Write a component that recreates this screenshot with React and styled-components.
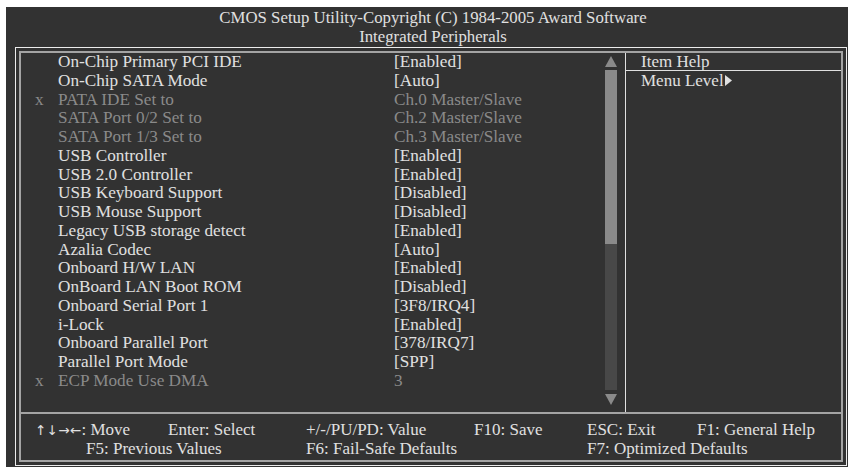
import React from "react";
import styled, { createGlobalStyle } from "styled-components";

const GlobalStyle = createGlobalStyle`
  html, body {
    margin: 0;
    padding: 0;
    background: #ffffff;
  }
  body {
    font-family: "Liberation Serif", "Times New Roman", serif;
  }
`;

const Screen = styled.div`
  margin: 7px 0 0 6px;
  width: 842px;
  height: 460px;
  background: #323232;
  color: #e0e0e0;
  font-size: 17px;
  display: flex;
  flex-direction: column;
  overflow: hidden;
`;

const Header = styled.div`
  height: 40px;
  padding-top: 1px;
  box-sizing: border-box;
  padding-left: 12px;
  text-align: center;
  line-height: 19px;
  font-size: 16.8px;
`;

const OuterFrame = styled.div`
  margin-left: 9px;
  width: 832px;
  height: 419px;
  box-sizing: border-box;
  border: 1px solid #ececec;
  padding: 3px;
`;

const InnerFrame = styled.div`
  height: 100%;
  box-sizing: border-box;
  border: 2px solid #a4a4a4;
  display: flex;
  flex-direction: column;
`;

const Main = styled.div`
  height: 359px;
  display: flex;
  border-bottom: 2px solid #a4a4a4;
`;

const LeftPane = styled.div`
  flex: 0 0 604px;
  display: flex;
`;

const List = styled.div`
  flex: 1;
  line-height: 18.77px;
  font-size: 17.2px;
`;

const Row = styled.div`
  display: grid;
  grid-template-columns: 37px 336px 1fr;
  color: ${(p) => (p.disabled ? "#8a8a8a" : "#e0e0e0")};
  white-space: nowrap;
`;

const Mark = styled.span`
  padding-left: 14px;
`;

const ScrollBar = styled.div`
  width: 12px;
  margin-right: 8px;
  padding-top: 3px;
  display: flex;
  flex-direction: column;
  align-items: center;
`;

const Thumb = styled.div`
  width: 12px;
  height: 174px;
  margin-top: 3px;
  background: #8a8a8a;
`;

const Track = styled.div`
  width: 12px;
  height: 146px;
  background: #484848;
  margin-bottom: 4px;
`;

const HelpPane = styled.div`
  flex: 1;
  border-left: 1px solid #e0e0e0;
  display: flex;
  flex-direction: column;
`;

const HelpTitle = styled.div`
  height: 17px;
  line-height: 18px;
  padding-left: 15px;
  border-bottom: 1px solid #e0e0e0;
`;

const HelpLine = styled.div`
  padding-left: 15px;
  line-height: 19px;
  display: flex;
  align-items: center;
  gap: 1px;
`;

const Footer = styled.div`
  flex: 1;
  padding: 7px 0 0 14px;
  display: grid;
  grid-template-columns: 133px 138px 168px 113px 110px 1fr;
  grid-auto-rows: 18.5px;
  line-height: 18.5px;
  white-space: nowrap;
`;

const Key = styled.span`
  grid-column: ${(p) => p.span || "auto"};
  padding-left: ${(p) => p.indent || 0}px;
`;

const Arrows = styled.span`
  font-family: "DejaVu Sans", sans-serif;
  font-size: 13.5px;
  letter-spacing: 0.3px;
`;

const Triangle = ({ down }) => (
  <svg width="12" height="11" viewBox="0 0 12 11">
    <polygon
      points={down ? "0,0 12,0 6,11" : "6,0 12,11 0,11"}
      fill="#8a8a8a"
    />
  </svg>
);

const items = [
  { label: "On-Chip Primary PCI IDE", value: "[Enabled]" },
  { label: "On-Chip SATA Mode", value: "[Auto]" },
  { label: "PATA IDE Set to", value: "Ch.0 Master/Slave", disabled: true, mark: true },
  { label: "SATA Port 0/2 Set to", value: "Ch.2 Master/Slave", disabled: true },
  { label: "SATA Port 1/3 Set to", value: "Ch.3 Master/Slave", disabled: true },
  { label: "USB Controller", value: "[Enabled]" },
  { label: "USB 2.0 Controller", value: "[Enabled]" },
  { label: "USB Keyboard Support", value: "[Disabled]" },
  { label: "USB Mouse Support", value: "[Disabled]" },
  { label: "Legacy USB storage detect", value: "[Enabled]" },
  { label: "Azalia Codec", value: "[Auto]" },
  { label: "Onboard H/W LAN", value: "[Enabled]" },
  { label: "OnBoard LAN Boot ROM", value: "[Disabled]" },
  { label: "Onboard Serial Port 1", value: "[3F8/IRQ4]" },
  { label: "i-Lock", value: "[Enabled]" },
  { label: "Onboard Parallel Port", value: "[378/IRQ7]" },
  { label: "Parallel Port Mode", value: "[SPP]" },
  { label: "ECP Mode Use DMA", value: "3", disabled: true, mark: true },
];

export default function App() {
  return (
    <>
      <GlobalStyle />
      <Screen>
        <Header>
          <div>CMOS Setup Utility-Copyright (C) 1984-2005 Award Software</div>
          <div>Integrated Peripherals</div>
        </Header>
        <OuterFrame>
          <InnerFrame>
            <Main>
              <LeftPane>
                <List>
                  {items.map((it) => (
                    <Row key={it.label} disabled={it.disabled}>
                      <Mark>{it.mark ? "x" : ""}</Mark>
                      <span>{it.label}</span>
                      <span>{it.value}</span>
                    </Row>
                  ))}
                </List>
                <ScrollBar>
                  <Triangle />
                  <Thumb />
                  <Track />
                  <Triangle down />
                </ScrollBar>
              </LeftPane>
              <HelpPane>
                <HelpTitle>Item Help</HelpTitle>
                <HelpLine>
                  Menu Level
                  <svg width="7" height="11" viewBox="0 0 7 11">
                    <polygon points="0,0 7,5.5 0,11" fill="#e0e0e0" />
                  </svg>
                </HelpLine>
              </HelpPane>
            </Main>
            <Footer>
              <Key>
                <Arrows>↑↓→←</Arrows>: Move
              </Key>
              <Key>Enter: Select</Key>
              <Key>+/-/PU/PD: Value</Key>
              <Key>F10: Save</Key>
              <Key>ESC: Exit</Key>
              <Key>F1: General Help</Key>
              <Key span="1 / span 2" indent={51}>F5: Previous Values</Key>
              <Key span="3 / span 2">F6: Fail-Safe Defaults</Key>
              <Key span="5 / span 2">F7: Optimized Defaults</Key>
            </Footer>
          </InnerFrame>
        </OuterFrame>
      </Screen>
    </>
  );
}
